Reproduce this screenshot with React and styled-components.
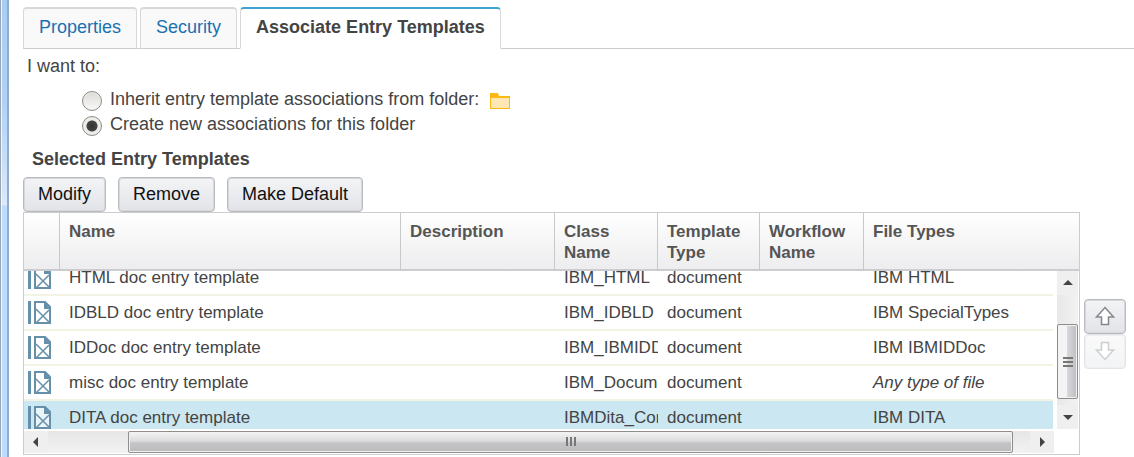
import React, { useLayoutEffect, useRef, useState } from "react";
import styled, { createGlobalStyle, css } from "styled-components";

const GlobalStyle = createGlobalStyle`
  * {
    box-sizing: border-box;
  }

  body {
    margin: 0;
    background: #fff;
    color: #444;
    font-family: "Liberation Sans", Arial, sans-serif;
    font-size: 18px;
    line-height: 25px;
  }

  button {
    font-family: inherit;
    font-size: inherit;
    line-height: inherit;
  }
`;

const Page = styled.div`
  display: flex;
  min-height: 100vh;
`;

const WindowEdge = styled.div`
  flex: none;
  width: 9px;
  border-left: 1px solid #9aa5b3;
  border-right: 2px solid #8fadd2;
  box-shadow: inset 1px 0 #eef6ff;
  background: linear-gradient(#a8cdf4 0, #b0d1f5 100px, #dbe9f9 205px, #bddaff 206px);
`;

const Main = styled.main`
  flex: 1;
  min-width: 0;
  padding: 7px 0 2px 14px;
`;

const TabList = styled.div`
  display: flex;
  gap: 3px;
  height: 42px;
  box-shadow: inset 0 -1px #ccc;
`;

const Tab = styled.button`
  padding: 0 15px 3px;
  border: 1px solid #d8d8d8;
  border-top-width: 2px;
  border-bottom-color: #ccc;
  border-radius: 4px 4px 0 0;
  background: #f9f9f9;
  color: #1970b0;
  white-space: nowrap;

  ${p => p.$active && css`
    border-top-color: #3fa5d0;
    border-bottom-color: #fff;
    background: #fff;
    color: #444;
    font-weight: bold;
  `}
`;

const Choices = styled.fieldset`
  margin: 0;
  padding: 0 4px;
  border: 0;
`;

const Legend = styled.legend`
  padding: 5px 0 9px;
`;

const Choice = styled.div`
  display: flex;
  align-items: center;
  height: 25px;
  padding-left: 55px;

  label {
    padding: 0 11px 2px 8px;
  }
`;

const Radio = styled.input`
  appearance: none;
  width: 20px;
  height: 20px;
  margin: 0;
  border: 1px solid #8b8b86;
  border-radius: 50%;
  background: linear-gradient(#dcdad5, #fafafa);
  box-shadow: inset 0 0 0 1px #efeeeb;

  &:checked {
    background: radial-gradient(circle at 50% 50%, #333 0, #444 5px, #eeece8 6px);
  }
`;

const SectionTitle = styled.h2`
  margin: 0;
  padding: 9px 9px 5px;
  font-size: 18px;
  line-height: 25px;
`;

const Toolbar = styled.div`
  display: flex;
  gap: 12px;
`;

const ToolButton = styled.button`
  height: 35px;
  padding: 0 14px;
  border: 1px solid #b9bbc0;
  border-radius: 4px;
  background: linear-gradient(#f3f4f6, #e1e3e6);
  box-shadow: inset 0 0 0 1px #d6d8db;
  color: #111;
`;

const ListArea = styled.div`
  display: flex;
  align-items: center;
  gap: 4px;
  padding-right: 8px;
`;

const Grid = styled.div`
  flex: 1;
  min-width: 0;
  border: 1px solid #ccc;
`;

const Table = styled.table`
  width: 100%;
  table-layout: fixed;
  border-collapse: separate;
  border-spacing: 0;
  font-size: 17px;
  line-height: 21px;
`;

const HeadCell = styled.th`
  height: 58px;
  padding: 8px 9px 5px;
  border-right: 1px solid #c8c8cb;
  border-bottom: 2px solid #ccccd0;
  background: linear-gradient(#fff, #ededef);
  color: #555;
  text-align: left;
  vertical-align: top;

  &:last-child {
    border-right: 0;
  }
`;

const Viewport = styled.div`
  display: grid;
  grid-template-columns: 1fr 22px;
  column-gap: 4px;
`;

const Rows = styled.div`
  height: 158px;
  overflow: hidden;
`;

const Row = styled.tr`
  background: ${p => (p.$selected ? "#cbe7f1" : "#fff")};
`;

const Cell = styled.td`
  height: 35px;
  padding: 0 0 0 9px;
  border-bottom: 2px solid #f2f2e5;
  overflow: hidden;
  white-space: nowrap;
  font-style: ${p => (p.$italic ? "italic" : "normal")};
`;

const IconCell = styled(Cell)`
  padding-left: 4px;

  svg {
    display: block;
  }
`;

const VScroll = styled.div`
  display: flex;
  flex-direction: column;
  margin-right: 1px;
  background: linear-gradient(90deg, #e8e8e8, #f2f2f2);
`;

const HScroll = styled.div`
  display: flex;
  height: 22px;
  margin: 2px 25px 1px 0;
  background: linear-gradient(#e6e6e6, #f2f2f2);
`;

const Arrow = styled.button`
  display: flex;
  flex: none;
  align-items: center;
  justify-content: center;
  padding: ${p => (p.$wide ? "0 7px" : "7px 0")};
  border: 0;
  background: #efefef;
`;

const Track = styled.div`
  display: flex;
  flex: 1;
  flex-direction: ${p => (p.$vertical ? "column" : "row")};
`;

const Thumb = styled.div`
  display: flex;
  flex: 1;
  align-items: center;
  justify-content: center;
  border: 1px solid #8e8e8e;
  border-radius: 2px;
  box-shadow: inset 0 0 0 1px #f2f2f2;

  ${p => p.$vertical ? css`
    margin: 29px 0 6px;
    background: linear-gradient(90deg, #f4f4f5 45%, #d8d8dc 50%, #bdbdc2);
  ` : css`
    margin: 0 17px 0 80px;
    background: linear-gradient(#f4f4f4 0, #dcdcde 45%, #c4c4c6 55%, #bcbcbe);
  `}
`;

const MoveButtons = styled.div`
  display: flex;
  flex-direction: column;
`;

const MoveButton = styled(ToolButton)`
  display: flex;
  align-items: center;
  justify-content: center;
  width: 42px;
  padding: 0;

  &:disabled {
    opacity: 0.4;
  }
`;

const columns = [
  { label: "", width: 36 },
  { label: "Name" },
  { label: "Description", width: 154 },
  { label: "Class Name", width: 103 },
  { label: "Template Type", width: 102 },
  { label: "Workflow Name", width: 104 },
  { label: "File Types", width: 215, bodyWidth: 189 },
];

const templates = [
  { name: "HTML doc entry template", className: "IBM_HTML", files: "IBM HTML" },
  { name: "IDBLD doc entry template", className: "IBM_IDBLD", files: "IBM SpecialTypes" },
  { name: "IDDoc doc entry template", className: "IBM_IBMIDD", files: "IBM IBMIDDoc" },
  { name: "misc doc entry template", className: "IBM_Docum", files: "Any type of file", any: true },
  { name: "DITA doc entry template", className: "IBMDita_Con", files: "IBM DITA" },
];

const tabs = ["Properties", "Security", "Associate Entry Templates"];

const FolderIcon = () => (
  <svg width="20" height="18" viewBox="0 0 20 18" aria-hidden="true">
    <path d="M0 1h8l1 3h11v13H0z" fill="#fdb813" />
    <path d="M1 6h18v10H1z" fill="#ffe7b3" />
  </svg>
);

const TemplateIcon = () => (
  <svg width="24" height="24" viewBox="0 0 24 24" fill="none" stroke="#6690aa" aria-hidden="true">
    <path d="M1.500 0v23" strokeWidth="3" />
    <path d="M7 1h10l5 5v16H7z" fill="#fff" fillOpacity=".6" strokeWidth="2" />
    <path d="M16 0l7 8h-7z" fill="#6690aa" stroke="none" />
    <path d="M8 8l14 14M21 9L8 22" strokeWidth="1.500" />
  </svg>
);

const arrowPaths = {
  up: "M5 2l5 5H0z",
  down: "M0 3h10L5 8z",
  left: "M7 0v10L2 5z",
  right: "M3 0l5 5-5 5z",
};

const ScrollArrow = ({ to }) => (
  <Arrow type="button" aria-label={`Scroll ${to}`} $wide={to === "left" || to === "right"}>
    <svg width="10" height="10" viewBox="0 0 10 10">
      <path d={arrowPaths[to]} fill="#444" />
    </svg>
  </Arrow>
);

const Grip = ({ vertical }) => (
  <svg width="12" height="12" viewBox="0 0 12 12" stroke="#777" strokeWidth="2">
    <path d={vertical ? "M1 2h10M1 6h10M1 10h10" : "M2 1v9M6 1v9M10 1v9"} />
  </svg>
);

const MoveArrow = ({ down }) => (
  <svg width="20" height="20" viewBox="0 0 20 20">
    <path
      d={down ? "M6.500 1.500h7V9H18.500L10 18.500 1.500 9h5z" : "M10 1.500L18.500 11h-5v7.500h-7V11h-5z"}
      fill="#fff"
      stroke="#85878a"
      strokeWidth="1.500"
    />
  </svg>
);

const Columns = ({ body }) => (
  <colgroup>
    {columns.map(c => (
      <col key={c.label} width={(body && c.bodyWidth) || c.width} />
    ))}
  </colgroup>
);

export default function App() {
  const rowsRef = useRef(null);
  const [mode, setMode] = useState("create");
  const [selected, setSelected] = useState(4);

  // open the list scrolled down towards the selected entry
  useLayoutEffect(() => {
    rowsRef.current.scrollTop = 10;
  }, []);

  return (
    <Page>
      <GlobalStyle />
      <WindowEdge />
      <Main>
        <TabList role="tablist">
          {tabs.map((t, i) => (
            <Tab key={t} type="button" role="tab" aria-selected={i === 2} $active={i === 2}>
              {t}
            </Tab>
          ))}
        </TabList>

        <Choices>
          <Legend>I want to:</Legend>
          <Choice>
            <Radio
              type="radio"
              name="mode"
              id="inherit"
              checked={mode === "inherit"}
              onChange={() => setMode("inherit")}
            />
            <label htmlFor="inherit">Inherit entry template associations from folder:</label>
            <FolderIcon />
          </Choice>
          <Choice>
            <Radio
              type="radio"
              name="mode"
              id="create"
              checked={mode === "create"}
              onChange={() => setMode("create")}
            />
            <label htmlFor="create">Create new associations for this folder</label>
          </Choice>
        </Choices>

        <SectionTitle>Selected Entry Templates</SectionTitle>
        <Toolbar>
          <ToolButton type="button">Modify</ToolButton>
          <ToolButton type="button">Remove</ToolButton>
          <ToolButton type="button">Make Default</ToolButton>
        </Toolbar>

        <ListArea>
          <Grid>
            <Table>
              <Columns />
              <thead>
                <tr>
                  {columns.map(c => (
                    <HeadCell key={c.label} scope="col">{c.label}</HeadCell>
                  ))}
                </tr>
              </thead>
            </Table>
            <Viewport>
              <Rows ref={rowsRef}>
                <Table>
                  <Columns body />
                  <tbody>
                    {templates.map((t, i) => (
                      <Row key={t.name} $selected={i === selected} onClick={() => setSelected(i)}>
                        <IconCell><TemplateIcon /></IconCell>
                        <Cell>{t.name}</Cell>
                        <Cell />
                        <Cell>{t.className}</Cell>
                        <Cell>document</Cell>
                        <Cell />
                        <Cell $italic={t.any}>{t.files}</Cell>
                      </Row>
                    ))}
                  </tbody>
                </Table>
              </Rows>
              <VScroll>
                <ScrollArrow to="up" />
                <Track $vertical>
                  <Thumb $vertical><Grip vertical /></Thumb>
                </Track>
                <ScrollArrow to="down" />
              </VScroll>
            </Viewport>
            <HScroll>
              <ScrollArrow to="left" />
              <Track>
                <Thumb><Grip /></Thumb>
              </Track>
              <ScrollArrow to="right" />
            </HScroll>
          </Grid>
          <MoveButtons>
            <MoveButton type="button" aria-label="Move up"><MoveArrow /></MoveButton>
            <MoveButton type="button" aria-label="Move down" disabled><MoveArrow down /></MoveButton>
          </MoveButtons>
        </ListArea>
      </Main>
    </Page>
  );
}
